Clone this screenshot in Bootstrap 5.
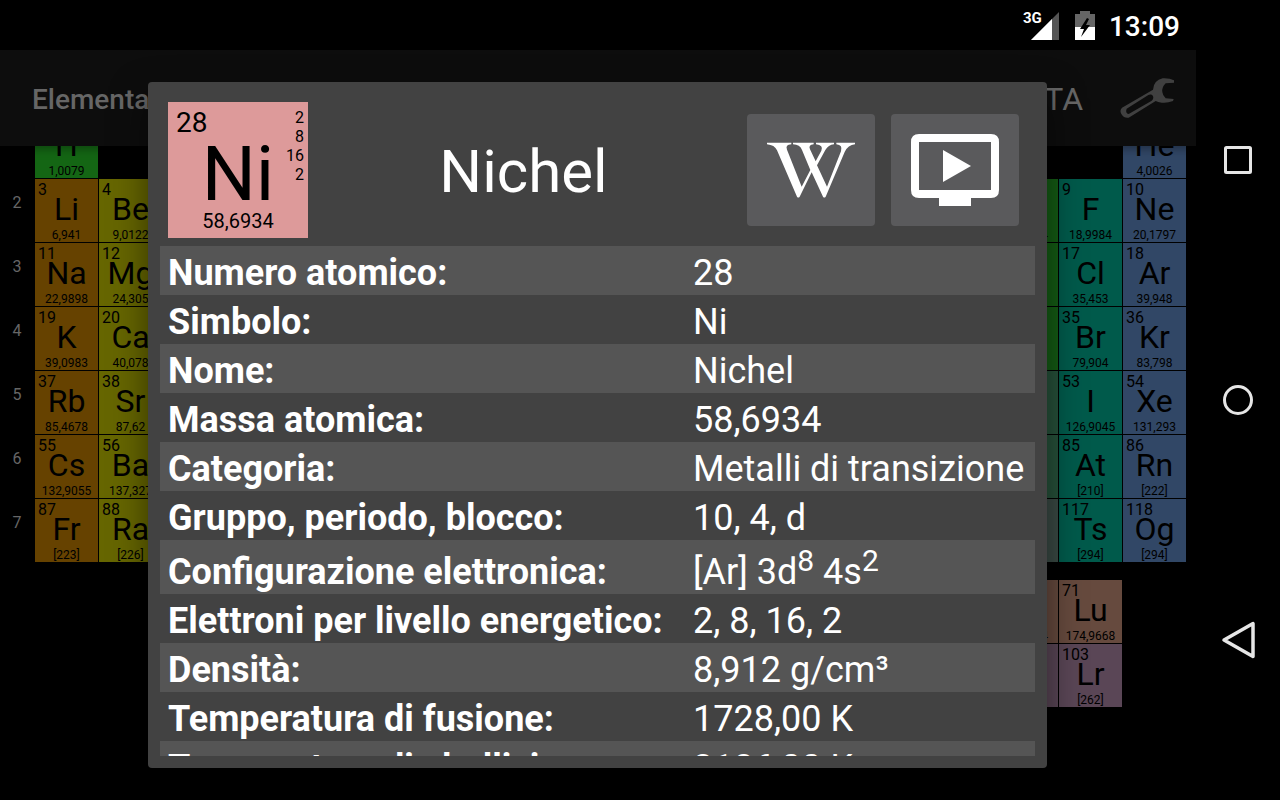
<!DOCTYPE html>
<html lang="it">
<head>
<meta charset="utf-8">
<meta name="viewport" content="width=device-width, initial-scale=1">
<title>Nichel</title>
<link href="https://cdn.jsdelivr.net/npm/bootstrap@5.3.0/dist/css/bootstrap.min.css" rel="stylesheet">
<style>
body{font-family:Roboto,"Noto Sans",sans-serif;background:#000;color:#fff}
.statusbar{height:50px;padding-top:2px}
.status-icon{margin-right:14px}
.net{font-size:15px;line-height:16px;left:-8px;top:-1px}
.clock{font-size:28px;line-height:32px;font-weight:500;padding-top:2px}
.appbar{height:96px;background:#0d0d0d;color:#666;box-shadow:0 2px 10px rgba(0,0,0,.4);z-index:1}
.appname{font-size:28px;line-height:32px;font-weight:500;padding-top:4px}
.tab-link{font-size:32px;line-height:38px;color:#666;padding-top:2px;margin-right:28px}
.elements{display:grid;grid-template-columns:34px repeat(18,63px);grid-template-rows:repeat(7,63px) 16px repeat(2,63px);gap:1px;margin-top:-31px}
.period{font-size:16px;line-height:19px;padding-top:14px;color:#666;text-align:center}
.el{color:#000;text-align:center;white-space:nowrap}
.el .num{display:block;font-size:16px;line-height:19px;text-align:left;padding:1px 0 0 3px;margin-bottom:-9px}
.el .sym{display:block;font-size:32px;line-height:38px}
.el .mass{display:block;font-size:12px;line-height:14px}
.hyd{background:#146614}.alk{background:#664200}.ear{background:#666600}.non{background:#145c14}
.semi{background:#26513a}.unk{background:#3a4a44}.hal{background:#005a4b}.gas{background:#314766}
.lan{background:#664a3e}.act{background:#5a4656}
.overlay{top:50px;padding:32px 1px 32px 0;z-index:2}
.sheet{width:899px;max-width:100%;background:#424242;border-radius:4px;padding:20px 12px 12px;box-shadow:0 16px 36px rgba(0,0,0,.5)}
.bigtile{width:140px;height:136px;background:#dd9a9a;color:#000;padding:5px 0}
.bigtile .num{font-size:28px;line-height:32px;padding-left:8px}
.bigtile .sym{font-size:76px;line-height:70px}
.bigtile .mass{font-size:20px;line-height:24px}
.shells{top:6px;right:4px;font-size:16px;line-height:19px}
.name{font-size:60px;line-height:70px;font-weight:400;padding-top:4px}
.tool{width:128px;height:112px;background:#5a5a5c;border:0;border-radius:4px;color:#fff}
.tool svg{width:88px;height:88px}
.facts{font-size:36px;line-height:41px;color:#fff;white-space:nowrap}
.facts th,.facts td{padding:7px 8px 1px;font-weight:400}
.facts th{width:60%;font-weight:700}
.facts tr:nth-child(odd){background:#555}
.facts .tall{height:54px;vertical-align:bottom}
.facts sup{font-size:30px;line-height:0;top:-13px;vertical-align:baseline}
.sysnav{width:84px}
.sysnav button{height:30%;width:84px}
</style>
</head>
<body>
<div class="d-flex vh-100 overflow-hidden">
  <div class="flex-grow-1 d-flex flex-column position-relative overflow-hidden">
    <header class="statusbar d-flex align-items-center justify-content-end pe-3">
      <div class="position-relative me-3">
        <svg class="d-block" width="28" height="30" viewBox="0 0 28 30"><path d="M28 1V29H0Z" fill="#555"/><path d="M21 8V29H0Z" fill="#fff"/></svg>
        <span class="net fw-bold position-absolute">3G</span>
      </div>
      <svg class="status-icon" width="20" height="30" viewBox="0 0 20 30"><path d="M5 0H15V3H20V16H0V3H5Z" fill="#666"/><path d="M0 16H20V29H0Z" fill="#fff"/><path d="M12 7L5 18H9L6 26L15 14H11L14 8Z" fill="#000"/></svg>
      <span class="clock">13:09</span>
    </header>
    <nav class="appbar d-flex align-items-center justify-content-between px-3 position-relative">
      <span class="appname ms-3">Elementary</span>
      <div class="d-flex align-items-center">
        <a href="#" class="tab-link text-decoration-none">LISTA</a>
        <button class="btn p-0 border-0 ms-2 me-1" aria-label="Impostazioni"><svg class="d-block" width="57" height="43" viewBox="420 230 171 129"><path fill="#404040" fill-rule="evenodd" d="M429 322L522 268Q524 240 551 234Q571 233 585 240V247L560 249Q548 260 550 275Q551 286 560 294L584 296L582 302Q565 309 548 307Q537 306 530 302L449 352Q436 355 427 341Q421 330 429 322ZM443 325Q438 338 449 341L517 302Q525 296 522 287Q517 280 508 284Z"/></svg></button>
      </div>
    </nav>
    <main class="flex-grow-1 overflow-hidden">
      <div class="elements" id="elements"></div>
    </main>
    <div class="overlay position-absolute start-0 end-0 bottom-0 d-flex justify-content-center">
      <section class="sheet d-flex flex-column" role="dialog" aria-labelledby="name">
        <div class="d-flex align-items-center px-2 mb-2">
          <div class="bigtile position-relative flex-shrink-0 text-center">
            <div class="num text-start">28</div>
            <div class="sym">Ni</div>
            <div class="mass">58,6934</div>
            <div class="shells position-absolute text-end">2<br>8<br>16<br>2</div>
          </div>
          <h1 class="name flex-grow-1 text-center m-0" id="name">Nichel</h1>
          <button class="tool mx-2 p-0" aria-label="Wikipedia"><svg viewBox="111 138 264 264"><path fill="currentColor" d="M111 188H184V193Q165 194 171 209L215 320L241 270L216 210Q210 194 189 193V188H251V193Q234 195 240 208L257 244L274 212Q281 195 258 193V188H312V193Q295 195 286 210L261 256L291 320L333 214Q339 195 319 193V188H375V193Q354 195 344 216L287 350Q283 355 279 350L245 277L209 350Q205 355 201 350L141 211Q134 195 111 193Z"/></svg></button>
          <button class="tool ms-2 me-2 p-0" aria-label="Video"><svg viewBox="0 0 88 88"><path fill="currentColor" fill-rule="evenodd" d="M8 8H80Q88 8 88 16V64Q88 72 80 72H60V80H28V72H8Q0 72 0 64V16Q0 8 8 8ZM8 16V64H80V16ZM32 24L60 40L32 56Z"/></svg></button>
        </div>
        <div class="flex-grow-1 overflow-hidden">
          <table class="facts w-100">
            <tbody>
            <tr><th scope="row">Numero atomico:</th><td>28</td></tr>
            <tr><th scope="row">Simbolo:</th><td>Ni</td></tr>
            <tr><th scope="row">Nome:</th><td>Nichel</td></tr>
            <tr><th scope="row">Massa atomica:</th><td>58,6934</td></tr>
            <tr><th scope="row">Categoria:</th><td>Metalli di transizione</td></tr>
            <tr><th scope="row">Gruppo, periodo, blocco:</th><td>10, 4, d</td></tr>
            <tr class="tall"><th scope="row">Configurazione elettronica:</th><td>[Ar] 3d<sup>8</sup> 4s<sup>2</sup></td></tr>
            <tr><th scope="row">Elettroni per livello energetico:</th><td>2, 8, 16, 2</td></tr>
            <tr><th scope="row">Densità:</th><td>8,912 g/cm³</td></tr>
            <tr><th scope="row">Temperatura di fusione:</th><td>1728,00 K</td></tr>
            <tr><th scope="row">Temperatura di ebollizione:</th><td>3186,00 K</td></tr>
            </tbody>
          </table>
        </div>
      </section>
    </div>
  </div>
  <nav class="sysnav flex-shrink-0 d-flex flex-column justify-content-center">
    <button class="btn border-0 p-0" aria-label="Recenti"><svg width="36" height="36" viewBox="0 0 36 36" fill="none" stroke="#e6e6e6" stroke-width="3"><rect x="5.500" y="5.500" width="25" height="25" rx="1"/></svg></button>
    <button class="btn border-0 p-0" aria-label="Home"><svg width="36" height="36" viewBox="0 0 36 36" fill="none" stroke="#e6e6e6" stroke-width="3"><circle cx="18" cy="18" r="13.500"/></svg></button>
    <button class="btn border-0 p-0" aria-label="Indietro"><svg width="36" height="40" viewBox="0 0 36 40" fill="none" stroke="#e6e6e6" stroke-width="3.500" stroke-linejoin="round"><path d="M4 20L33 3.500V36.500Z"/></svg></button>
  </nav>
</div>
<script src="https://cdn.jsdelivr.net/npm/bootstrap@5.3.0/dist/js/bootstrap.bundle.min.js"></script>
<script>
// row, group, number, symbol, mass, category
const data = [
 [1,1,1,'H','1,0079','hyd'],[1,18,2,'He','4,0026','gas'],
 [2,1,3,'Li','6,941','alk'],[2,2,4,'Be','9,0122','ear'],[2,16,8,'O','15,9994','non'],[2,17,9,'F','18,9984','hal'],[2,18,10,'Ne','20,1797','gas'],
 [3,1,11,'Na','22,9898','alk'],[3,2,12,'Mg','24,305','ear'],[3,16,16,'S','32,065','non'],[3,17,17,'Cl','35,453','hal'],[3,18,18,'Ar','39,948','gas'],
 [4,1,19,'K','39,0983','alk'],[4,2,20,'Ca','40,078','ear'],[4,16,34,'Se','78,96','non'],[4,17,35,'Br','79,904','hal'],[4,18,36,'Kr','83,798','gas'],
 [5,1,37,'Rb','85,4678','alk'],[5,2,38,'Sr','87,62','ear'],[5,16,52,'Te','127,6','semi'],[5,17,53,'I','126,9045','hal'],[5,18,54,'Xe','131,293','gas'],
 [6,1,55,'Cs','132,9055','alk'],[6,2,56,'Ba','137,327','ear'],[6,16,84,'Po','[209]','semi'],[6,17,85,'At','[210]','hal'],[6,18,86,'Rn','[222]','gas'],
 [7,1,87,'Fr','[223]','alk'],[7,2,88,'Ra','[226]','ear'],[7,16,116,'Lv','[293]','unk'],[7,17,117,'Ts','[294]','hal'],[7,18,118,'Og','[294]','gas'],
 [9,16,70,'Yb','173,054','lan'],[9,17,71,'Lu','174,9668','lan'],
 [10,16,102,'No','[259]','act'],[10,17,103,'Lr','[262]','act']
];
let html = '';
for (let p = 2; p <= 7; p++) html += `<div class="period" style="grid-area:${p}/1">${p}</div>`;
for (const [row, group, num, sym, mass, cat] of data)
  html += `<div class="el ${cat}" style="grid-area:${row}/${group + 1}"><span class="num">${num}</span><span class="sym">${sym}</span><span class="mass">${mass}</span></div>`;
document.getElementById('elements').innerHTML = html;
</script>
</body>
</html>
